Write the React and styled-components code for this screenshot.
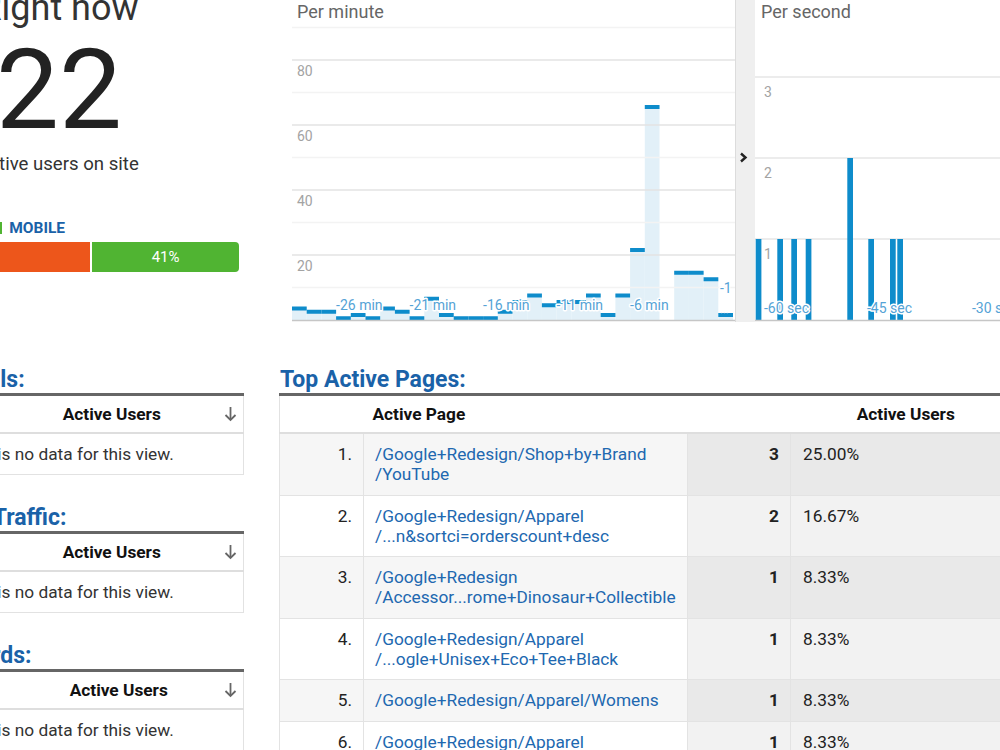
import React from "react";
import styled, { createGlobalStyle } from "styled-components";

const GlobalStyle = createGlobalStyle`
  html, body {
    margin: 0;
    padding: 0;
    background: #fff;
    overflow: hidden;
  }
  body {
    font-family: Roboto, "Liberation Sans", Arial, sans-serif;
    color: #222;
  }
`;

const BLUE = "#0e8ccb";
const FILL = "#e2f0f8";
const AXIS_TEXT = "#55a3d6";

const Page = styled.div`
  width: 1245px;
  margin: -8px 0 0 -121px;
`;

/* ---------- top: right now + charts ---------- */

const TopRow = styled.div`
  display: flex;
  align-items: flex-start;
  height: 376px;
`;

const NowPanel = styled.div`
  width: 360px;
  margin-right: 53px;
  text-align: center;
`;

const NowTitle = styled.div`
  margin-top: -2px;
  font-size: 36px;
  line-height: 36px;
  color: #333;
`;

const NowCount = styled.div`
  margin-top: 8px;
  font-size: 112px;
  line-height: 112px;
  color: #222;
`;

const NowLabel = styled.div`
  margin-top: 6.5px;
  font-size: 18.6px;
  line-height: 22px;
  color: #333;
`;

const Legend = styled.div`
  display: flex;
  gap: 24px;
  margin-top: 45.5px;
  height: 16px;
`;

const LegendItem = styled.div`
  display: flex;
  align-items: center;
  gap: 7px;
  font-size: 15.5px;
  line-height: 16px;
  font-weight: bold;
  color: #1a62a8;
  &::before {
    content: "";
    width: 12px;
    height: 12px;
    background: ${(p) => p.$color};
  }
`;

const SplitBar = styled.div`
  display: flex;
  gap: 2px;
  height: 30px;
  margin-top: 6px;
  border-radius: 4px;
  overflow: hidden;
`;

const SplitPart = styled.div`
  flex: ${(p) => p.$share};
  background: ${(p) => p.$color};
  color: #fff;
  font-size: 15px;
  line-height: 30px;
  text-align: center;
`;

const ChartPanel = styled.div`
  width: ${(p) => p.$width}px;
  padding-top: 10px;
`;

const ChartTitle = styled.div`
  font-size: 18px;
  line-height: 20px;
  color: #666;
  padding-left: ${(p) => p.$pad}px;
`;

const ChartSvg = styled.svg`
  display: block;
  font-family: Roboto, "Liberation Sans", Arial, sans-serif;
`;

const Divider = styled.div`
  width: 20px;
  height: 330px;
  background: #efefef;
  border-left: 1px solid #dcdcdc;
  display: flex;
  align-items: center;
  justify-content: center;
  padding-right: 4px;
  box-sizing: border-box;
`;

/* ---------- bottom: tables ---------- */

const BottomRow = styled.div`
  display: flex;
  align-items: flex-start;
`;

const SideColumn = styled.div`
  width: 365px;
  margin-right: 35px;
`;

const MainColumn = styled.div`
  width: 845px;
`;

const Section = styled.section`
  margin-bottom: 31px;
`;

const SectionTitle = styled.h2`
  margin: 0 0 1px;
  padding-left: 1px;
  font-size: 23px;
  line-height: 24px;
  font-weight: bold;
  color: #1a62a8;
  white-space: nowrap;
`;

const Table = styled.table`
  width: 100%;
  table-layout: fixed;
  border-collapse: collapse;
  border: 1px solid #e2e2e2;
  border-top: 3px solid #666;
  font-size: 17.3px;
  line-height: 20px;
`;

const Th = styled.th`
  padding: 8px ${(p) => (p.$sort ? "6px" : "9px")} 8px 9px;
  border-bottom: 2px solid #dedede;
  text-align: ${(p) => p.$align || "left"};
  font-weight: bold;
  color: #111;
  background: #fff;
  white-space: nowrap;
`;

const SortHead = styled.div`
  display: flex;
  align-items: center;
  span {
    flex: 1;
    text-align: center;
  }
`;

const EmptyCell = styled.td`
  padding: 10px;
  text-align: center;
  color: #333;
  white-space: nowrap;
`;

const Td = styled.td`
  vertical-align: top;
  padding: 10px 11px 10.5px ${(p) => p.$padLeft || 11}px;
  border: 1px solid #e3e3e3;
  white-space: nowrap;
  text-align: ${(p) => p.$align || "left"};
  font-weight: ${(p) => (p.$bold ? "bold" : "normal")};
  background: ${(p) =>
    p.$sorted
      ? p.$odd
        ? "#e9e9e9"
        : "#f2f2f2"
      : p.$odd
      ? "#f6f6f6"
      : "#fff"};
  color: #222;
`;

const PageLink = styled.a`
  color: #2168b0;
  text-decoration: none;
  cursor: pointer;
`;

/* ---------- drawings ---------- */

const perMinute = [4, 3, 3, 1, 2, 1, 4, 3, 1, 7, 2, 1, 1, 1, 3, 6, 8, 5, 6, 6, 8, 2, 8, 22, 66, 0, 15, 15, 13, 2];
const perSecond = [
  [0.7, 1], [22.3, 1], [36.3, 1], [50.7, 1], [92.3, 2], [113.3, 1], [135, 1], [142.3, 1],
];

const labelStyle = {
  paintOrder: "stroke",
  stroke: "#fff",
  strokeWidth: 3,
  strokeLinejoin: "round",
};

function MinuteChart() {
  const base = 298;
  const unit = 3.25;
  const step = 14.7;
  return (
    <ChartSvg width="443" height="300">
      {perMinute.map((v, i) =>
        v > 0 ? (
          <rect key={"f" + i} x={i * step} y={base - v * unit} width={step} height={v * unit} fill={FILL} />
        ) : null
      )}
      {Array.from({ length: 9 }, (_, k) => {
        const y = base - 32.5 * (k + 1);
        return (
          <line key={"g" + k} x1="0" x2="443" y1={y} y2={y} stroke={(k + 1) % 2 === 0 ? "#e3e3e3" : "#f3f3f3"} strokeWidth="1.5" />
        );
      })}
      {[20, 40, 60, 80].map((v) => (
        <text key={v} x="5" y={base - v * unit + 16} fontSize="14" fill="#a3a3a3">
          {v}
        </text>
      ))}
      {perMinute.map((v, i) =>
        v > 0 ? (
          <rect key={"c" + i} x={i * step} y={base - v * unit - 0.5} width={step} height="4" fill={BLUE} />
        ) : null
      )}
      {["-26 min", "-21 min", "-16 min", "-11 min", "-6 min"].map((t, j) => (
        <text key={t} x={(3 + j * 5) * step} y="288" fontSize="14" fill={AXIS_TEXT} style={labelStyle}>
          {t}
        </text>
      ))}
      <text x="428" y="271" fontSize="14" fill={AXIS_TEXT} style={labelStyle}>-1</text>
      <text x="428" y="292" fontSize="11" fill={AXIS_TEXT}>...</text>
      <line x1="0" x2="443" y1={base + 0.5} y2={base + 0.5} stroke="#c6c6c6" strokeWidth="1.5" />
    </ChartSvg>
  );
}

function SecondChart() {
  const base = 298;
  const unit = 81;
  return (
    <ChartSvg width="368" height="300">
      {[1, 2, 3].map((v) => (
        <g key={v}>
          <line x1="0" x2="368" y1={base - v * unit} y2={base - v * unit} stroke="#e6e6e6" strokeWidth="1.5" />
          <text x="9" y={base - v * unit + 20} fontSize="14" fill="#a3a3a3">
            {v}
          </text>
        </g>
      ))}
      {perSecond.map(([x, v]) => (
        <rect key={x} x={x} y={base - v * unit} width="5.7" height={v * unit} fill={BLUE} />
      ))}
      {[["-60 sec", 9], ["-45 sec", 112], ["-30 sec", 217]].map(([t, x]) => (
        <text key={t} x={x} y="291" fontSize="14" fill={AXIS_TEXT} style={labelStyle}>
          {t}
        </text>
      ))}
      <line x1="0" x2="368" y1={base + 0.5} y2={base + 0.5} stroke="#c6c6c6" strokeWidth="1.5" />
    </ChartSvg>
  );
}

const Chevron = () => (
  <svg width="9" height="11" viewBox="0 0 9 11">
    <polyline points="2,1.5 6.5,5.5 2,9.5" fill="none" stroke="#222" strokeWidth="2.4" />
  </svg>
);

const SortArrow = () => (
  <svg width="13" height="16" viewBox="0 0 13 16">
    <line x1="6.5" y1="1" x2="6.5" y2="14" stroke="#666" strokeWidth="1.8" />
    <polyline points="1.5,9 6.5,14 11.5,9" fill="none" stroke="#666" strokeWidth="1.8" />
  </svg>
);

/* ---------- data ---------- */

const sideTables = [
  { title: "Top Referrals:", first: "Source", width: 111 },
  { title: "Top Social Traffic:", first: "Source", width: 111 },
  { title: "Top Keywords:", first: "Keyword", width: 125 },
];

const pages = [
  { path: ["/Google+Redesign/Shop+by+Brand", "/YouTube"], users: 3, pct: "25.00%" },
  { path: ["/Google+Redesign/Apparel", "/...n&sortci=orderscount+desc"], users: 2, pct: "16.67%" },
  { path: ["/Google+Redesign", "/Accessor...rome+Dinosaur+Collectible"], users: 1, pct: "8.33%" },
  { path: ["/Google+Redesign/Apparel", "/...ogle+Unisex+Eco+Tee+Black"], users: 1, pct: "8.33%" },
  { path: ["/Google+Redesign/Apparel/Womens"], users: 1, pct: "8.33%" },
  { path: ["/Google+Redesign/Apparel", "/...Womens+Short+Sleeve+Tee"], users: 1, pct: "8.33%" },
];

function SideTable({ title, first, width }) {
  return (
    <Section>
      <SectionTitle>{title}</SectionTitle>
      <Table>
        <colgroup>
          <col style={{ width }} />
          <col />
        </colgroup>
        <thead>
          <tr>
            <Th>{first}</Th>
            <Th $sort>
              <SortHead>
                <span>Active Users</span>
                <SortArrow />
              </SortHead>
            </Th>
          </tr>
        </thead>
        <tbody>
          <tr>
            <EmptyCell colSpan={2}>There is no data for this view.</EmptyCell>
          </tr>
        </tbody>
      </Table>
    </Section>
  );
}

export default function App() {
  return (
    <>
      <GlobalStyle />
      <Page>
        <TopRow>
          <NowPanel>
            <NowTitle>Right now</NowTitle>
            <NowCount>22</NowCount>
            <NowLabel>active users on site</NowLabel>
            <Legend>
              <LegendItem $color="#ed561b">DESKTOP</LegendItem>
              <LegendItem $color="#50b432">MOBILE</LegendItem>
            </Legend>
            <SplitBar>
              <SplitPart $share={59} $color="#ed561b">59%</SplitPart>
              <SplitPart $share={41} $color="#50b432">41%</SplitPart>
            </SplitBar>
          </NowPanel>
          <ChartPanel $width={443}>
            <ChartTitle $pad={5}>Per minute</ChartTitle>
            <MinuteChart />
          </ChartPanel>
          <Divider>
            <Chevron />
          </Divider>
          <ChartPanel $width={368}>
            <ChartTitle $pad={6}>Per second</ChartTitle>
            <SecondChart />
          </ChartPanel>
        </TopRow>

        <BottomRow>
          <SideColumn>
            {sideTables.map((t) => (
              <SideTable key={t.title} {...t} />
            ))}
          </SideColumn>
          <MainColumn>
            <SectionTitle>Top Active Pages:</SectionTitle>
            <Table>
              <colgroup>
                <col style={{ width: 84 }} />
                <col style={{ width: 324 }} />
                <col style={{ width: 103 }} />
                <col style={{ width: 334 }} />
              </colgroup>
              <thead>
                <tr>
                  <Th />
                  <Th>Active Page</Th>
                  <Th colSpan={2} $align="center">
                    Active Users
                  </Th>
                </tr>
              </thead>
              <tbody>
                {pages.map((p, i) => {
                  const odd = i % 2 === 0;
                  return (
                    <tr key={i}>
                      <Td $align="right" $odd={odd}>
                        {i + 1}.
                      </Td>
                      <Td $odd={odd}>
                        <PageLink>
                          {p.path.map((line, j) => (
                            <React.Fragment key={j}>
                              {j > 0 && <br />}
                              {line}
                            </React.Fragment>
                          ))}
                        </PageLink>
                      </Td>
                      <Td $align="right" $bold $sorted $odd={odd}>
                        {p.users}
                      </Td>
                      <Td $sorted $odd={odd} $padLeft={12}>
                        {p.pct}
                      </Td>
                    </tr>
                  );
                })}
              </tbody>
            </Table>
          </MainColumn>
        </BottomRow>
      </Page>
    </>
  );
}
